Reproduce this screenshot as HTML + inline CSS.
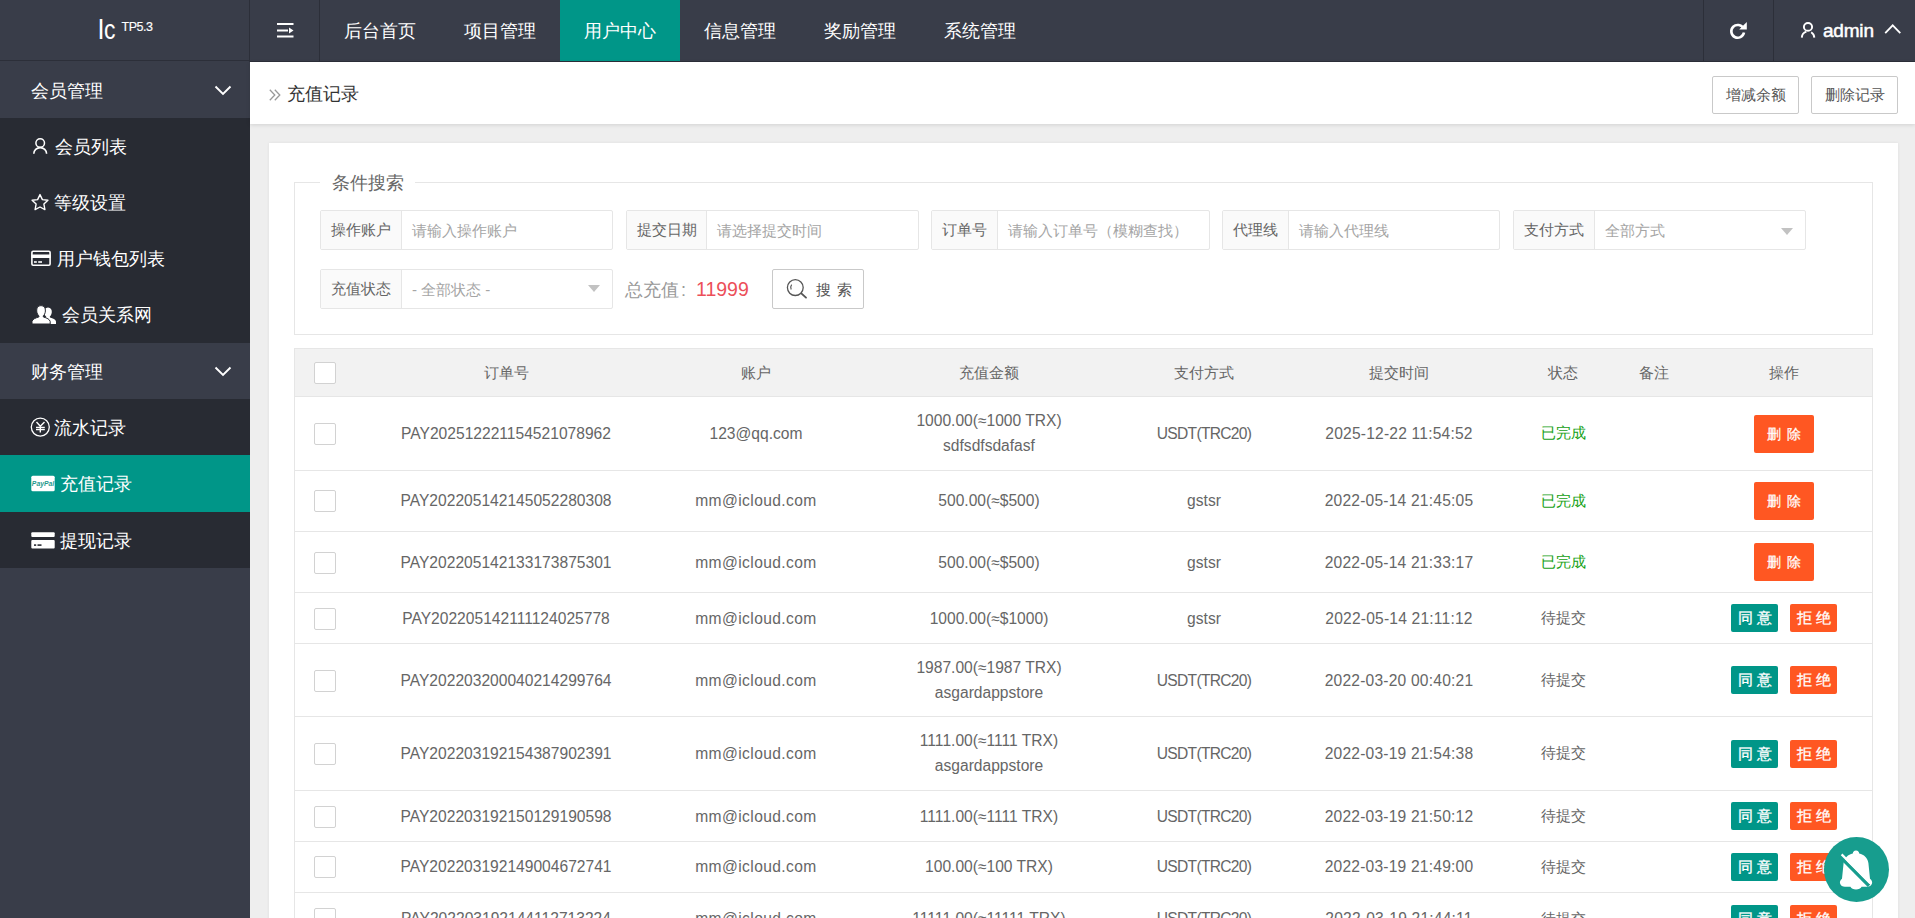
<!DOCTYPE html>
<html><head><meta charset="utf-8">
<style>
*{margin:0;padding:0;box-sizing:border-box}
html,body{width:1915px;height:918px;overflow:hidden;background:#eeeeee;font-family:"Liberation Sans",sans-serif;color:#666}
.abs{position:absolute}
#hdr{position:absolute;left:0;top:0;width:1915px;height:62px;background:#393D49}
#hdr .line{position:absolute;background:#2c2f39}
.logo{position:absolute;left:98px;top:15px;color:#fff;font-size:27px;white-space:nowrap}
.logo sup{font-size:12.5px;-webkit-text-stroke:0.15px #fff;letter-spacing:-0.5px;position:relative;top:-8px;margin-left:6px;vertical-align:baseline}
.nav{position:absolute;top:0;height:61px;width:120px;color:#fff;font-size:18px;line-height:63px;text-align:center}
.nav.on{background:#009688}
#side{position:absolute;left:0;top:62px;width:250px;height:856px;background:#393D49}
.si{position:absolute;left:0;width:250px;height:56px;color:#fff;font-size:18px;line-height:56px}
.si.sub{background:#282B33}
.si.on{background:#009688}
.si .t{position:absolute;left:31px;top:1px}
.crumb{position:absolute;left:250px;top:62px;width:1665px;height:62px;background:#fff;box-shadow:0 1px 4px rgba(0,0,0,.12)}
.btn-p{position:absolute;top:14px;height:38px;width:87px;border:1px solid #c9c9c9;border-radius:2px;background:#fff;color:#555;font-size:15px;line-height:36px;text-align:center}
.card{position:absolute;left:269px;top:143px;width:1629px;height:800px;background:#fff;box-shadow:0 0 3px rgba(0,0,0,.07)}
.fs{position:absolute;left:294px;top:182px;width:1579px;height:153px;border:1px solid #e6e6e6}
.legend{position:absolute;left:320px;top:171px;width:95px;height:24px;background:#fff;color:#666;font-size:18px;line-height:24px;text-align:center}
.ig{position:absolute;height:40px;border:1px solid #e6e6e6;border-radius:2px;background:#fff}
.ig .lb{position:absolute;left:0;top:0;height:38px;background:#fafafa;border-right:1px solid #e6e6e6;color:#666;font-size:15px;line-height:38px;text-align:center}
.ig .ph{position:absolute;top:0;height:38px;line-height:39px;color:#a5a5a5;font-size:15px;white-space:nowrap}
.tri{position:absolute;width:0;height:0;border-left:6.5px solid transparent;border-right:6.5px solid transparent;border-top:7px solid #c2c2c2}
.tbl{position:absolute;left:294px;top:348px;width:1579px;height:600px;border:1px solid #e6e6e6;background:#fff}
.th{position:absolute;left:294px;top:348px;width:1579px;height:49px;background:#f2f2f2;border:1px solid #e6e6e6}
.hl{position:absolute;left:295px;width:1577px;height:1px;background:#e6e6e6}
.cb{position:absolute;left:314px;width:22px;height:22px;border:1px solid #d2d2d2;border-radius:2px;background:#fff}
.c{position:absolute;width:300px;margin-left:-150px;text-align:center;font-size:15.6px;color:#666;white-space:nowrap;line-height:25px}
.c.h,.c.g,.c.cj{font-size:15px}
.g{color:#159f15}
.bd{position:absolute;width:60px;height:38px;left:1754px;background:#FF5722;color:#fff;border-radius:2px;font-size:14px;line-height:38px;text-align:center;letter-spacing:6px;text-indent:6px;-webkit-text-stroke:0.25px #fff}
.bs{position:absolute;width:47px;height:28px;color:#fff;border-radius:2px;font-size:15px;line-height:28px;text-align:center;letter-spacing:4px;text-indent:4px;-webkit-text-stroke:0.3px #fff}
.bs.a{left:1731px;background:#009688}
.bs.r{left:1790px;background:#FF5722}
</style></head><body>
<div id="hdr">
  <div class="logo">l<span style="display:inline-block;transform:scaleX(0.85);transform-origin:left;margin-right:-2px">c</span><sup>TP5.3</sup></div>
  <div class="line" style="left:0;top:60px;width:250px;height:1px"></div>
  <div class="line" style="left:249px;top:0;width:1px;height:62px"></div>
  <div class="line" style="left:319px;top:0;width:1px;height:62px"></div>
  <div class="line" style="left:250px;top:61px;width:1665px;height:1px"></div>
  <div class="line" style="left:1703px;top:0;width:1px;height:62px"></div>
  <div class="line" style="left:1773px;top:0;width:1px;height:62px"></div>
  <svg class="abs" style="left:276px;top:22px" width="18" height="16" viewBox="0 0 18 16"><rect x="1" y="1" width="16.5" height="2" fill="#fff"/><rect x="1" y="7.5" width="11" height="2" fill="#fff"/><path d="M13 5.6 L17.5 8.5 L13 11.4Z" fill="#fff"/><rect x="1" y="13.5" width="16.5" height="2" fill="#fff"/></svg>
  <svg class="abs" style="left:1729px;top:20px" width="19" height="20" viewBox="0 0 19 20"><path d="M14.4 8.4 A6.4 6.4 0 1 0 15 12.6" fill="none" stroke="#fff" stroke-width="2.6"/><path d="M17.8 2 L17.8 9.6 L10.2 9.6Z" fill="#fff"/></svg>
  <svg class="abs" style="left:1799px;top:21px" width="18" height="18" viewBox="0 0 18 18"><ellipse cx="9" cy="5.9" rx="4.1" ry="3.9" fill="none" stroke="#fff" stroke-width="1.9"/><path d="M2.8 16.6 A6.4 6.6 0 0 1 7.4 10.6" fill="none" stroke="#fff" stroke-width="1.9"/><path d="M12.2 11.2 A6.4 6.6 0 0 1 15.3 16.6" fill="none" stroke="#fff" stroke-width="1.9"/></svg>
  <div class="abs" style="left:1823px;top:0;line-height:61px;font-size:19px;-webkit-text-stroke:0.5px #fff;letter-spacing:-0.2px;color:#fff">admin</div>
  <svg class="abs" style="left:1884px;top:23px" width="18" height="12" viewBox="0 0 18 12"><path d="M1.2 10.2 L8.7 2.4 L16.3 10.2" fill="none" stroke="#fff" stroke-width="1.8"/></svg>
  <div class="nav" style="left:320px">后台首页</div>
  <div class="nav" style="left:440px">项目管理</div>
  <div class="nav on" style="left:560px">用户中心</div>
  <div class="nav" style="left:680px">信息管理</div>
  <div class="nav" style="left:800px">奖励管理</div>
  <div class="nav" style="left:920px">系统管理</div>
</div>
<div id="side">
  <div class="si" style="top:0"><span class="t">会员管理</span></div>
  <div class="si sub" style="top:56px"><span class="t" style="left:55px">会员列表</span></div>
  <div class="si sub" style="top:112px"><span class="t" style="left:54px">等级设置</span></div>
  <div class="si sub" style="top:168px"><span class="t" style="left:57px">用户钱包列表</span></div>
  <div class="si sub" style="top:224px;height:57px"><span class="t" style="left:62px">会员关系网</span></div>
  <div class="si" style="top:281px"><span class="t">财务管理</span></div>
  <div class="si sub" style="top:337px"><span class="t" style="left:54px">流水记录</span></div>
  <div class="si on" style="top:393px;height:57px"><span class="t" style="left:60px">充值记录</span></div>
  <div class="si sub" style="top:450px"><span class="t" style="left:60px">提现记录</span></div>
  <svg class="abs" style="left:214px;top:23px" width="18" height="11" viewBox="0 0 18 11"><path d="M1.5 1.5 L9 9 L16.5 1.5" fill="none" stroke="#fff" stroke-width="1.9"/></svg>
  <svg class="abs" style="left:214px;top:304px" width="18" height="11" viewBox="0 0 18 11"><path d="M1.5 1.5 L9 9 L16.5 1.5" fill="none" stroke="#fff" stroke-width="1.9"/></svg>
  <svg class="abs" style="left:32px;top:75px" width="17" height="18" viewBox="0 0 17 18"><circle cx="8.2" cy="6" r="4.3" fill="none" stroke="#fff" stroke-width="1.5"/><path d="M1.8 16.8 A6.4 6.2 0 0 1 14.6 16.8" fill="none" stroke="#fff" stroke-width="1.6"/></svg>
  <svg class="abs" style="left:30px;top:131px" width="20" height="19" viewBox="0 0 20 19"><path d="M10 1.6 L12.4 6.6 L17.9 7.3 L13.9 11.1 L14.9 16.6 L10 14 L5.1 16.6 L6.1 11.1 L2.1 7.3 L7.6 6.6Z" fill="none" stroke="#fff" stroke-width="1.4" stroke-linejoin="round"/></svg>
  <svg class="abs" style="left:30px;top:187px" width="22" height="18" viewBox="0 0 22 18"><rect x="1.9" y="2.2" width="18.2" height="14" rx="1.2" fill="none" stroke="#fff" stroke-width="1.6"/><rect x="1.5" y="5.5" width="19" height="3.5" fill="#fff"/><rect x="4" y="12.2" width="2.8" height="1.6" fill="#fff"/><rect x="8.2" y="12.2" width="3.8" height="1.6" fill="#fff"/></svg>
  <svg class="abs" style="left:31px;top:243px" width="26" height="20" viewBox="0 0 26 20"><path d="M17 2.4 C19.8 2.4 21 4.6 20.8 7.2 C20.6 9.6 19.6 11 18.8 11.6 L19 12.6 C22 13.4 24.6 14.6 25 16.4 L25 19 L15 19 C15 16 13.5 14.5 12.2 13.8 L15 12.6 L15.2 11.6 C14.4 11 13.4 9.6 13.2 7.2 C13 4.6 14.2 2.4 17 2.4Z" fill="#fff"/><path d="M10 0.6 C13.2 0.6 14.6 3 14.4 6 C14.2 8.6 13.2 10.2 12.2 10.9 L12.4 12 C15.8 12.9 18.8 14.3 19.2 16.5 L19.2 19 L1 19 L1 16.5 C1.4 14.3 4.4 12.9 7.8 12 L8 10.9 C7 10.2 5.9 8.6 5.7 6 C5.5 3 6.8 0.6 10 0.6Z" fill="#fff" stroke="#282B33" stroke-width="1"/></svg>
  <svg class="abs" style="left:30px;top:355px" width="21" height="21" viewBox="0 0 21 21"><circle cx="10.3" cy="10.1" r="9" fill="none" stroke="#fff" stroke-width="1.3"/><path d="M6.5 5 L10.3 9.3 L14.5 5 M10.3 9.3 L10.3 15.6 M6 10.4 H14.8 M6 12.5 H14.8" fill="none" stroke="#fff" stroke-width="1.4"/></svg>
  <svg class="abs" style="left:31px;top:413px" width="24" height="17" viewBox="0 0 24 17"><rect x="0.3" y="0.8" width="23.4" height="15.4" rx="1.5" fill="#fff"/><text x="12" y="11" text-anchor="middle" font-family="Liberation Sans" font-style="italic" font-weight="bold" font-size="6.8" fill="#1f9a8e">PayPal</text></svg>
  <svg class="abs" style="left:31px;top:470px" width="24" height="17" viewBox="0 0 24 17"><rect x="0.3" y="0.3" width="23.4" height="4.8" rx="1" fill="#fff"/><rect x="0.3" y="8" width="23.4" height="8.4" rx="1" fill="#fff"/><rect x="3" y="12.3" width="2.2" height="1.6" fill="#282B33"/><rect x="6.5" y="12.3" width="4" height="1.6" fill="#282B33"/></svg>
</div>
<!--SIDEEND-->
<div class="crumb">
  <svg class="abs" style="left:18px;top:26px" width="15" height="14" viewBox="0 0 15 14"><path d="M1.8 1.8 L6.8 7 L1.8 12.2 M6.8 1.8 L11.8 7 L6.8 12.2" fill="none" stroke="#999" stroke-width="1.3"/></svg>
  <span class="abs" style="left:37px;top:1px;line-height:62px;font-size:18px;color:#333">充值记录</span>
  <div class="btn-p" style="left:1462px">增减余额</div>
  <div class="btn-p" style="left:1561px">删除记录</div>
</div>
<div class="card"></div>
<div class="fs"></div>
<div class="legend">条件搜索</div>

<div class="ig" style="left:320px;top:210px;width:293px"><div class="lb" style="width:81px">操作账户</div><div class="ph" style="left:91px">请输入操作账户</div></div>
<div class="ig" style="left:626px;top:210px;width:293px"><div class="lb" style="width:80px">提交日期</div><div class="ph" style="left:90px">请选择提交时间</div></div>
<div class="ig" style="left:931px;top:210px;width:279px"><div class="lb" style="width:66px">订单号</div><div class="ph" style="left:76px">请输入订单号（模糊查找）</div></div>
<div class="ig" style="left:1222px;top:210px;width:278px"><div class="lb" style="width:66px">代理线</div><div class="ph" style="left:76px">请输入代理线</div></div>
<div class="ig" style="left:1513px;top:210px;width:293px"><div class="lb" style="width:81px">支付方式</div><div class="ph" style="left:91px">全部方式</div><div class="tri" style="left:267px;top:17px"></div></div>
<div class="ig" style="left:320px;top:269px;width:293px"><div class="lb" style="width:81px">充值状态</div><div class="ph" style="left:91px">- 全部状态 -</div><div class="tri" style="left:267px;top:15px"></div></div>
<div class="abs" style="left:625px;top:275px;line-height:28px;font-size:18px;color:#999;white-space:nowrap">总充值<span style="margin-left:2px">:</span><span style="color:#ec4f59;margin-left:10px;font-size:19.5px">11999</span></div>
<div class="abs" style="left:772px;top:269px;width:92px;height:40px;border:1px solid #c9c9c9;border-radius:2px;background:#fff">
 <svg class="abs" style="left:13px;top:9px" width="22" height="22" viewBox="0 0 22 22"><circle cx="9.3" cy="8.6" r="7.9" fill="none" stroke="#555" stroke-width="1.3"/><path d="M15.3 14.4 L20 18.6" stroke="#555" stroke-width="1.9" stroke-linecap="round"/><path d="M5.6 5.6 A5 5 0 0 0 5.2 10.6" fill="none" stroke="#555" stroke-width="1.1"/></svg>
 <div class="abs" style="left:43px;top:1px;line-height:38px;font-size:15px;color:#555;letter-spacing:6px">搜索</div>
</div>

<!--TBL-->
<div class="tbl"></div>
<div class="th"></div>
<div class="cb" style="top:362px"></div>
<div class="c h" style="left:506px;top:360px">订单号</div>
<div class="c h" style="left:756px;top:360px">账户</div>
<div class="c h" style="left:989px;top:360px">充值金额</div>
<div class="c h" style="left:1204px;top:360px">支付方式</div>
<div class="c h" style="left:1399px;top:360px">提交时间</div>
<div class="c h" style="left:1563px;top:360px">状态</div>
<div class="c h" style="left:1654px;top:360px">备注</div>
<div class="c h" style="left:1784px;top:360px">操作</div>
<div class="hl" style="top:470px"></div>
<div class="cb" style="top:423px"></div>
<div class="c" style="left:506px;top:421px">PAY202512221154521078962</div>
<div class="c" style="left:756px;top:421px">123@qq.com</div>
<div class="c" style="left:989px;top:408px"><span style="letter-spacing:0px">1000.00(≈1000 TRX)</span><br><span style="letter-spacing:0px">sdfsdfsdafasf</span></div>
<div class="c" style="left:1204px;top:421px;letter-spacing:-0.7px">USDT(TRC20)</div>
<div class="c" style="left:1399px;top:421px;letter-spacing:0.2px">2025-12-22 11:54:52</div>
<div class="c g" style="left:1563px;top:420px">已完成</div>
<div class="bd" style="top:415px">删除</div>
<div class="hl" style="top:531px"></div>
<div class="cb" style="top:490px"></div>
<div class="c" style="left:506px;top:488px">PAY202205142145052280308</div>
<div class="c" style="left:756px;top:488px;letter-spacing:0.4px">mm@icloud.com</div>
<div class="c" style="left:989px;top:488px"><span style="letter-spacing:0px">500.00(≈$500)</span></div>
<div class="c" style="left:1204px;top:488px">gstsr</div>
<div class="c" style="left:1399px;top:488px;letter-spacing:0.2px">2022-05-14 21:45:05</div>
<div class="c g" style="left:1563px;top:488px">已完成</div>
<div class="bd" style="top:482px">删除</div>
<div class="hl" style="top:592px"></div>
<div class="cb" style="top:552px"></div>
<div class="c" style="left:506px;top:550px">PAY202205142133173875301</div>
<div class="c" style="left:756px;top:550px;letter-spacing:0.4px">mm@icloud.com</div>
<div class="c" style="left:989px;top:550px"><span style="letter-spacing:0px">500.00(≈$500)</span></div>
<div class="c" style="left:1204px;top:550px">gstsr</div>
<div class="c" style="left:1399px;top:550px;letter-spacing:0.2px">2022-05-14 21:33:17</div>
<div class="c g" style="left:1563px;top:549px">已完成</div>
<div class="bd" style="top:543px">删除</div>
<div class="hl" style="top:643px"></div>
<div class="cb" style="top:608px"></div>
<div class="c" style="left:506px;top:606px">PAY202205142111124025778</div>
<div class="c" style="left:756px;top:606px;letter-spacing:0.4px">mm@icloud.com</div>
<div class="c" style="left:989px;top:606px"><span style="letter-spacing:0px">1000.00(≈$1000)</span></div>
<div class="c" style="left:1204px;top:606px">gstsr</div>
<div class="c" style="left:1399px;top:606px;letter-spacing:0.2px">2022-05-14 21:11:12</div>
<div class="c cj" style="left:1563px;top:605px">待提交</div>
<div class="bs a" style="top:604px">同意</div>
<div class="bs r" style="top:604px">拒绝</div>
<div class="hl" style="top:716px"></div>
<div class="cb" style="top:670px"></div>
<div class="c" style="left:506px;top:668px">PAY202203200040214299764</div>
<div class="c" style="left:756px;top:668px;letter-spacing:0.4px">mm@icloud.com</div>
<div class="c" style="left:989px;top:655px"><span style="letter-spacing:0px">1987.00(≈1987 TRX)</span><br><span style="letter-spacing:0px">asgardappstore</span></div>
<div class="c" style="left:1204px;top:668px;letter-spacing:-0.7px">USDT(TRC20)</div>
<div class="c" style="left:1399px;top:668px;letter-spacing:0.2px">2022-03-20 00:40:21</div>
<div class="c cj" style="left:1563px;top:667px">待提交</div>
<div class="bs a" style="top:666px">同意</div>
<div class="bs r" style="top:666px">拒绝</div>
<div class="hl" style="top:790px"></div>
<div class="cb" style="top:743px"></div>
<div class="c" style="left:506px;top:741px">PAY202203192154387902391</div>
<div class="c" style="left:756px;top:741px;letter-spacing:0.4px">mm@icloud.com</div>
<div class="c" style="left:989px;top:728px"><span style="letter-spacing:0px">1111.00(≈1111 TRX)</span><br><span style="letter-spacing:0px">asgardappstore</span></div>
<div class="c" style="left:1204px;top:741px;letter-spacing:-0.7px">USDT(TRC20)</div>
<div class="c" style="left:1399px;top:741px;letter-spacing:0.2px">2022-03-19 21:54:38</div>
<div class="c cj" style="left:1563px;top:740px">待提交</div>
<div class="bs a" style="top:740px">同意</div>
<div class="bs r" style="top:740px">拒绝</div>
<div class="hl" style="top:841px"></div>
<div class="cb" style="top:806px"></div>
<div class="c" style="left:506px;top:804px">PAY202203192150129190598</div>
<div class="c" style="left:756px;top:804px;letter-spacing:0.4px">mm@icloud.com</div>
<div class="c" style="left:989px;top:804px"><span style="letter-spacing:0px">1111.00(≈1111 TRX)</span></div>
<div class="c" style="left:1204px;top:804px;letter-spacing:-0.7px">USDT(TRC20)</div>
<div class="c" style="left:1399px;top:804px;letter-spacing:0.2px">2022-03-19 21:50:12</div>
<div class="c cj" style="left:1563px;top:803px">待提交</div>
<div class="bs a" style="top:802px">同意</div>
<div class="bs r" style="top:802px">拒绝</div>
<div class="hl" style="top:892px"></div>
<div class="cb" style="top:856px"></div>
<div class="c" style="left:506px;top:854px">PAY202203192149004672741</div>
<div class="c" style="left:756px;top:854px;letter-spacing:0.4px">mm@icloud.com</div>
<div class="c" style="left:989px;top:854px"><span style="letter-spacing:0px">100.00(≈100 TRX)</span></div>
<div class="c" style="left:1204px;top:854px;letter-spacing:-0.7px">USDT(TRC20)</div>
<div class="c" style="left:1399px;top:854px;letter-spacing:0.2px">2022-03-19 21:49:00</div>
<div class="c cj" style="left:1563px;top:854px">待提交</div>
<div class="bs a" style="top:853px">同意</div>
<div class="bs r" style="top:853px">拒绝</div>
<div class="hl" style="top:945px"></div>
<div class="cb" style="top:908px"></div>
<div class="c" style="left:506px;top:906px">PAY202203192144112713224</div>
<div class="c" style="left:756px;top:906px;letter-spacing:0.4px">mm@icloud.com</div>
<div class="c" style="left:989px;top:906px"><span style="letter-spacing:0px">11111.00(≈11111 TRX)</span></div>
<div class="c" style="left:1204px;top:906px;letter-spacing:-0.7px">USDT(TRC20)</div>
<div class="c" style="left:1399px;top:906px;letter-spacing:0.2px">2022-03-19 21:44:11</div>
<div class="c cj" style="left:1563px;top:906px">待提交</div>
<div class="bs a" style="top:905px">同意</div>
<div class="bs r" style="top:905px">拒绝</div>
<!--/TBL-->
<svg class="abs" style="left:1823px;top:836px" width="67" height="67" viewBox="0 0 67 67"><circle cx="33.5" cy="33.5" r="32.5" fill="#179d8e"/><path d="M33 14.6 C35.2 14.6 36 16 36.2 17.6 C41 18.6 44.6 21.8 45.4 27 L47 42.8 C48.6 44.2 49.6 45.6 49 47.6 C48.2 50 46.4 50.8 44 50.8 L38.6 50.8 C37.6 52.6 35.6 53.4 33 53.4 C30.4 53.4 28.4 52.6 27.4 50.8 L22 50.8 C19.6 50.8 17.8 50 17.1 47.6 C16.5 45.6 17.4 44.2 19 42.8 L20.6 27 C21.4 21.8 25 18.6 29.8 17.6 C30 16 30.8 14.6 33 14.6Z" fill="#fff"/><path d="M17.5 21 L46 49.8" stroke="#179d8e" stroke-width="3.4"/><path d="M18.6 18.4 L47.2 47.2" stroke="#fff" stroke-width="2.2"/></svg>

</body></html>
